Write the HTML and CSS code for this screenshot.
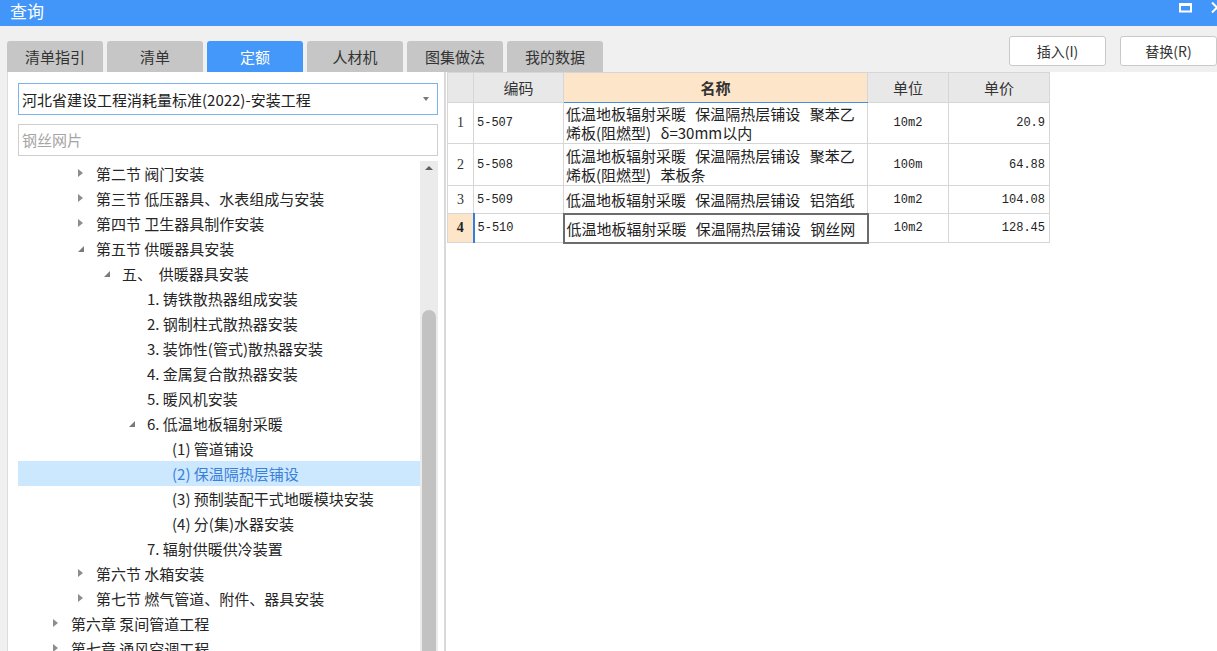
FILE: index.html
```html
<!DOCTYPE html>
<html lang="zh-CN">
<head>
<meta charset="utf-8">
<title>查询</title>
<link rel="stylesheet" href="styles.css">
</head>
<body>
<div class="titlebar">
  <span class="title">查询</span>
  <div class="winbtns">
    <svg class="ico-max" width="13" height="10" viewBox="0 0 13 10"><rect x="1" y="1.5" width="11" height="7" fill="none" stroke="#fff" stroke-width="2"/><rect x="0" y="0" width="13" height="3" fill="#fff"/></svg>
    <svg class="ico-close" width="12" height="11" viewBox="0 0 12 11"><path d="M1 0.5 L11 10.5 M11 0.5 L1 10.5" stroke="#fff" stroke-width="2"/></svg>
  </div>
</div>
<div class="toolbar">
  <div class="tabs">
    <div class="tab">清单指引</div>
    <div class="tab">清单</div>
    <div class="tab active">定额</div>
    <div class="tab">人材机</div>
    <div class="tab">图集做法</div>
    <div class="tab">我的数据</div>
  </div>
  <div class="actions">
    <button class="btn">插入(I)</button>
    <button class="btn">替换(R)</button>
  </div>
</div>
<div class="main">
  <div class="left">
    <div class="combo"><span>河北省建设工程消耗量标准(2022)-安装工程</span><span class="caret"></span></div>
    <div class="search">钢丝网片</div>
    <div class="treewrap">
      <ul class="tree">
        <li class="l1"><i class="tw closed"></i>第二节 阀门安装</li>
        <li class="l1"><i class="tw closed"></i>第三节 低压器具、水表组成与安装</li>
        <li class="l1"><i class="tw closed"></i>第四节 卫生器具制作安装</li>
        <li class="l1"><i class="tw open"></i>第五节 供暖器具安装</li>
        <li class="l2"><i class="tw open"></i>五、&nbsp; 供暖器具安装</li>
        <li class="l3"><i class="tw"></i>1. 铸铁散热器组成安装</li>
        <li class="l3"><i class="tw"></i>2. 钢制柱式散热器安装</li>
        <li class="l3"><i class="tw"></i>3. 装饰性(管式)散热器安装</li>
        <li class="l3"><i class="tw"></i>4. 金属复合散热器安装</li>
        <li class="l3"><i class="tw"></i>5. 暖风机安装</li>
        <li class="l3"><i class="tw open"></i>6. 低温地板辐射采暖</li>
        <li class="l4"><i class="tw"></i>(1) 管道铺设</li>
        <li class="l4 selected"><i class="tw"></i>(2) 保温隔热层铺设</li>
        <li class="l4"><i class="tw"></i>(3) 预制装配干式地暖模块安装</li>
        <li class="l4"><i class="tw"></i>(4) 分(集)水器安装</li>
        <li class="l3"><i class="tw"></i>7. 辐射供暖供冷装置</li>
        <li class="l1"><i class="tw closed"></i>第六节 水箱安装</li>
        <li class="l1"><i class="tw closed"></i>第七节 燃气管道、附件、器具安装</li>
        <li class="l0"><i class="tw closed"></i>第六章 泵间管道工程</li>
        <li class="l0 last"><i class="tw closed"></i>第七章 通风空调工程</li>
      </ul>
      <div class="vscroll">
        <div class="up"></div>
        <div class="track"><div class="thumb"></div></div>
      </div>
    </div>
  </div>
  <div class="right">
    <table class="grid">
      <colgroup>
        <col class="c-no"><col class="c-code"><col class="c-name"><col class="c-unit"><col class="c-price">
      </colgroup>
      <thead>
        <tr>
          <th class="no"></th>
          <th>编码</th>
          <th class="name-h">名称</th>
          <th>单位</th>
          <th>单价</th>
        </tr>
      </thead>
      <tbody>
        <tr class="r-tall">
          <td class="no">1</td>
          <td class="code">5-507</td>
          <td class="name">低温地板辐射采暖 保温隔热层铺设 聚苯乙<br>烯板(阻燃型) δ=30mm以内</td>
          <td class="unit">10m2</td>
          <td class="price">20.9</td>
        </tr>
        <tr class="r-tall2">
          <td class="no">2</td>
          <td class="code">5-508</td>
          <td class="name">低温地板辐射采暖 保温隔热层铺设 聚苯乙<br>烯板(阻燃型) 苯板条</td>
          <td class="unit">100m</td>
          <td class="price">64.88</td>
        </tr>
        <tr class="r-short">
          <td class="no">3</td>
          <td class="code">5-509</td>
          <td class="name">低温地板辐射采暖 保温隔热层铺设 铝箔纸</td>
          <td class="unit">10m2</td>
          <td class="price">104.08</td>
        </tr>
        <tr class="r-short2 cur">
          <td class="no">4</td>
          <td class="code">5-510</td>
          <td class="name focus">低温地板辐射采暖 保温隔热层铺设 钢丝网</td>
          <td class="unit">10m2</td>
          <td class="price">128.45</td>
        </tr>
      </tbody>
    </table>
  </div>
</div>
</body>
</html>
```

FILE: styles.css
```css
* { box-sizing: border-box; }
html, body {
  margin: 0;
  padding: 0;
  width: 1217px;
  height: 651px;
  overflow: hidden;
  background: #f0f0f0;
  font-family: "Noto Sans CJK SC", "Microsoft YaHei", sans-serif;
  color: #333;
}

.titlebar {
  height: 26px;
  background: #4296fa;
  display: flex;
  align-items: flex-start;
  justify-content: space-between;
  overflow: hidden;
}
.title {
  color: #fff;
  font-size: 17px;
  line-height: 21px;
  padding-left: 10px;
}
.winbtns {
  display: flex;
  align-items: flex-start;
  gap: 19px;
  padding-top: 2px;
  margin-right: -6px;
}
.ico-max { margin-top: 1px; }

.toolbar {
  height: 46px;
  display: flex;
  justify-content: space-between;
  align-items: flex-end;
}
.tabs {
  display: flex;
  gap: 4px;
  padding-left: 7px;
}
.tab {
  width: 96px;
  height: 31px;
  background: #c6c6c6;
  border-radius: 3px 3px 0 0;
  font-size: 15px;
  line-height: 31px;
  text-align: center;
  color: #333;
}
.tab.active {
  background: #4398f9;
  color: #fff;
}
.actions {
  display: flex;
  gap: 14px;
  align-self: flex-start;
  padding-top: 10px;
  padding-right: 0;
}
.btn {
  width: 97px;
  height: 30px;
  background: #fff;
  border: 1px solid #c9c9c9;
  border-radius: 3px;
  font-family: "Noto Sans CJK SC", sans-serif;
  font-size: 14px;
  color: #333;
  padding: 0;
}

.main {
  display: flex;
  height: 579px;
  padding-left: 7px;
}
.left {
  width: 439px;
  flex: none;
  background: #fff;
  border-left: 1px solid #dcdcdc;
  border-right: 2px solid #d9d9d9;
  padding: 11px 6px 0 10px;
  display: flex;
  flex-direction: column;
}
.combo {
  height: 32px;
  flex: none;
  border: 1px solid #7db3ec;
  display: flex;
  align-items: center;
  justify-content: space-between;
  padding: 0 8px 0 3px;
  font-size: 15px;
  color: #222;
}
.caret {
  width: 0;
  height: 0;
  border-left: 3.5px solid transparent;
  border-right: 3.5px solid transparent;
  border-top: 4px solid #777;
}
.search {
  margin-top: 9px;
  height: 32px;
  flex: none;
  border: 1px solid #cfcfcf;
  font-size: 15px;
  line-height: 30px;
  padding-left: 3px;
  color: #a5a5a5;
}
.treewrap {
  margin-top: 5px;
  flex: 1;
  min-height: 0;
  display: flex;
  overflow: hidden;
}
.tree {
  list-style: none;
  margin: 0;
  padding: 0;
  flex: 1;
  overflow: hidden;
}
.tree li {
  height: 25px;
  line-height: 25px;
  font-size: 15px;
  color: #262626;
  white-space: nowrap;
  display: flex;
  align-items: center;
}
.tree li.last { height: 15px; align-items: flex-start; overflow: visible; }
.tree li.l0 { padding-left: 35px; }
.tree li.l1 { padding-left: 60px; }
.tree li.l2 { padding-left: 86px; }
.tree li.l3 { padding-left: 111px; }
.tree li.l4 { padding-left: 136px; }
.tree li.selected {
  background: #cce8ff;
  color: #3b80d8;
}
.tw {
  width: 18px;
  height: 25px;
  flex: none;
  position: relative;
}
.tw.closed::before {
  content: "";
  position: absolute;
  left: 0;
  top: 8px;
  border-left: 5px solid #8d8d8d;
  border-top: 4px solid transparent;
  border-bottom: 4px solid transparent;
}
.tw.open::before {
  content: "";
  position: absolute;
  left: 0;
  top: 10px;
  border-bottom: 6px solid #7a7a7a;
  border-left: 6px solid transparent;
}
.vscroll {
  width: 18px;
  flex: none;
  background: #ebebeb;
  display: flex;
  flex-direction: column;
}
.up {
  height: 17px;
  flex: none;
  position: relative;
}
.up::before {
  content: "";
  position: absolute;
  left: 5px;
  top: 5px;
  border-bottom: 4px solid #606060;
  border-left: 4px solid transparent;
  border-right: 4px solid transparent;
}
.track {
  flex: 1;
  min-height: 0;
  overflow: hidden;
  padding: 132px 2px 0 2px;
}
.thumb {
  height: 400px;
  background: #c2c2c2;
  border-radius: 7px 7px 0 0;
}

.right {
  flex: 1;
  background: #fff;
  padding-left: 1px;
}
.grid {
  border-collapse: collapse;
  table-layout: fixed;
  width: 602px;
  font-size: 15px;
}
.c-no { width: 26px; }
.c-code { width: 90px; }
.c-name { width: 304px; }
.c-unit { width: 81px; }
.c-price { width: 101px; }
.grid th, .grid td {
  border: 1px solid #d6d6d6;
  padding: 0 3px;
  white-space: nowrap;
  overflow: hidden;
}
.grid thead tr { height: 30px; }
.grid th {
  background: #e8e8e8;
  font-weight: normal;
  font-size: 15px;
  color: #333;
  text-align: center;
}
.grid th.name-h {
  background: #fde5c9;
  font-weight: bold;
  border-bottom: 1px solid #3f8ee8;
}
.grid td {
  color: #222;
  vertical-align: middle;
}
.r-tall { height: 41px; }
.r-tall2 { height: 42px; }
.r-short { height: 28px; }
.r-short2 { height: 29px; }
.grid td.no {
  font-family: "Liberation Serif", serif;
  font-size: 14px;
  text-align: center;
  color: #333;
  padding: 0;
}
.grid tr.cur td.no {
  background: #fde5c9;
  font-weight: bold;
  color: #222;
}
.grid tr.cur td.code {
  border-left: 2px solid #2f7fe0;
}
.grid td.code {
  font-family: "Liberation Mono", monospace;
  font-size: 12px;
}
.grid td.name {
  line-height: 19px;
  font-size: 15px;
  padding-left: 2px;
  word-spacing: 6px;
}
.grid td.name.focus {
  border: 2px solid #6c6c6c;
}
.grid td.unit {
  font-family: "Liberation Mono", monospace;
  font-size: 12px;
  text-align: center;
}
.grid td.price {
  font-family: "Liberation Mono", monospace;
  font-size: 12px;
  text-align: right;
  padding-right: 4px;
}
```
